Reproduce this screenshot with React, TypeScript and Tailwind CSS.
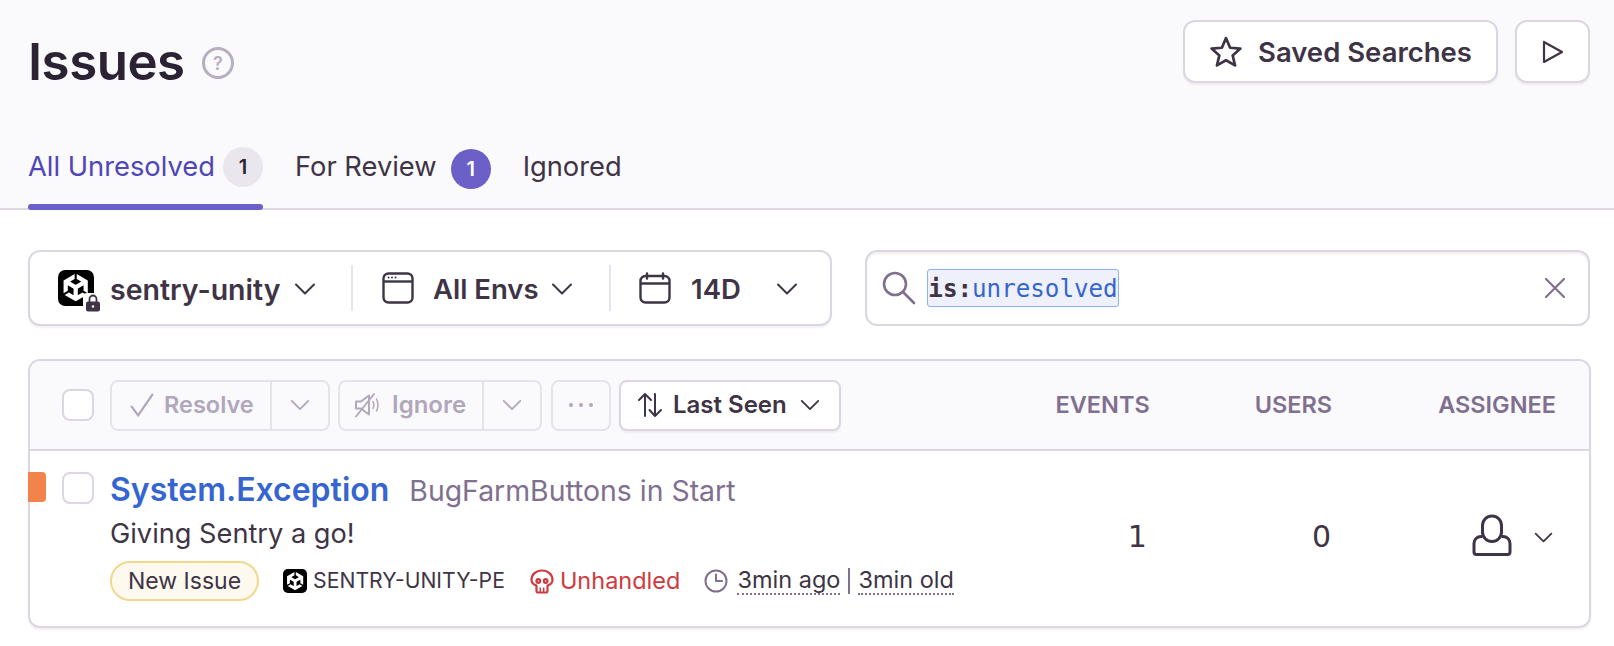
import React from "react";
import { SiUnity } from "react-icons/si";

const Chevron = ({ className = "", w = 24 }: { className?: string; w?: number }) => (
  <svg width={w} height={w} viewBox="0 0 24 24" fill="none" stroke="currentColor" strokeWidth="2" strokeLinecap="round" strokeLinejoin="round" className={className}>
    <path d="M3 7.500 12 16.500 21 7.500" />
  </svg>
);

const Unity = ({ size = 36 }: { size?: number }) => (
  <div className="w-full h-full rounded-[20%] bg-black flex items-center justify-center text-white">
    <SiUnity size={size * 0.76} />
  </div>
);

const Check = () => (
  <div className="w-[32px] h-[32px] rounded-[8px] border-2 border-[#dbd6e1] bg-white shrink-0" />
);

const Dim = "text-[#b0a7bc]";

export default function App() {
  return (
    <div className="w-[1614px] h-[646px] overflow-hidden bg-white text-[#3e3446] font-[Inter,sans-serif]">
      {/* Header */}
      <div className="h-[210px] bg-[#faf9fb] border-b-2 border-[#dbd6e1] pl-[28px] pr-[24px] flex flex-col">
        <div className="flex justify-between items-start pt-[20px] h-[147px]">
          <div className="flex items-center gap-[17px] pt-[16px]">
            <h1 className="text-[51px] leading-[52px] font-semibold text-[#2b2233] tracking-[-0.5px]">Issues</h1>
            <svg width="32" height="32" viewBox="0 0 32 32" fill="none" className="mt-[2px]">
              <circle cx="16" cy="16" r="14.500" stroke="#b6aec1" strokeWidth="3" />
              <text x="16" y="22.500" textAnchor="middle" fontSize="18" fontWeight="600" fill="#b6aec1" fontFamily="Inter">?</text>
            </svg>
          </div>
          <div className="flex gap-[17px]">
            <button className="h-[63px] w-[315px] rounded-[12px] border-2 border-[#dbd6e1] bg-white shadow-[0_2px_2px_rgba(43,34,51,0.06)] flex items-center justify-center gap-[15px] text-[27.500px] font-semibold">
              <svg width="34" height="34" viewBox="0 0 24 24" fill="none" stroke="currentColor" strokeWidth="1.900" strokeLinejoin="round"><path d="M12 2.200 14.900 9l7.300.6-5.500 4.800 1.700 7.100L12 17.800l-6.400 3.700 1.700-7.100-5.500-4.800L9.100 9Z" /></svg>
              <span className="pt-[2px]">Saved Searches</span>
            </button>
            <button className="h-[63px] w-[75px] rounded-[12px] border-2 border-[#dbd6e1] bg-white shadow-[0_2px_2px_rgba(43,34,51,0.06)] flex items-center justify-center">
              <svg width="22" height="24" viewBox="0 0 22 24" fill="none" stroke="currentColor" strokeWidth="2.200" strokeLinejoin="round"><path d="M2 2V22L20 12Z" /></svg>
            </button>
          </div>
        </div>
        <div className="flex items-start h-[61px] text-[27.300px] leading-[40px]">
          <div className="relative h-[63px] w-[235px] flex items-start gap-[8px] text-[#4f46b8]">
            <span>All Unresolved</span>
            <span className="w-[40px] h-[40px] rounded-full bg-[#e9e6ed] text-[#2b2233] text-[20px] font-semibold flex items-center justify-center">1</span>
            <div className="absolute left-0 right-0 bottom-0 h-[6px] rounded-[3px] bg-[#6c5fc7]" />
          </div>
          <div className="ml-[32px] flex items-start gap-[14px]">
            <span>For Review</span>
            <span className="w-[40px] h-[40px] mt-[2px] rounded-full bg-[#6c5fc7] text-white text-[20px] font-semibold flex items-center justify-center">1</span>
          </div>
          <span className="ml-[32px]">Ignored</span>
        </div>
      </div>

      {/* Filters */}
      <div className="flex gap-[33px] pl-[28px] pr-[24px] mt-[40px]">
        <div className="w-[804px] h-[76px] rounded-[12px] border-2 border-[#dbd6e1] bg-white shadow-[0_2px_2px_rgba(43,34,51,0.06)] flex items-center font-semibold">
          <div className="w-[321px] pl-[28px] flex items-center gap-[16px] text-[28.500px]">
            <div className="relative w-[36px] h-[36px]">
              <Unity />
              <div className="absolute -right-[9px] -bottom-[7px] w-[20px] h-[20px] bg-white rounded-[4px] flex items-center justify-center">
                <svg width="16" height="18" viewBox="0 0 16 18"><path d="M4.500 8V5a3.500 3.500 0 0 1 7 0v3" fill="none" stroke="#3e3446" strokeWidth="1.800" /><rect x="1" y="7.500" width="14" height="10" rx="2" fill="#3e3446" /><circle cx="8" cy="12.500" r="1.200" fill="#fff" /></svg>
              </div>
            </div>
            <span className="pt-[4px]">sentry-unity</span>
            <Chevron className="ml-[-3px] mt-[2px]" />
          </div>
          <div className="w-[2px] h-[46px] bg-[#e7e3ec]" />
          <div className="w-[256px] pl-[29px] flex items-center gap-[19px] text-[27.500px]">
            <svg width="32" height="32" viewBox="0 0 32 32" fill="none" stroke="currentColor" strokeWidth="2.400"><rect x="1.500" y="1.500" width="29" height="29" rx="5" /><path d="M2 9.500H30" /><circle cx="6.500" cy="5.500" r="1" fill="currentColor" stroke="none" /><circle cx="10" cy="5.500" r="1" fill="currentColor" stroke="none" /><circle cx="13.500" cy="5.500" r="1" fill="currentColor" stroke="none" /></svg>
            <span className="pt-[4px]">All Envs</span>
            <Chevron className="ml-[-8px] mt-[2px]" />
          </div>
          <div className="w-[2px] h-[46px] bg-[#e7e3ec]" />
          <div className="pl-[28px] flex items-center gap-[20px] text-[27.500px]">
            <svg width="32" height="32" viewBox="0 0 32 32" fill="none" stroke="currentColor" strokeWidth="2.400" strokeLinecap="round"><rect x="1.500" y="4" width="29" height="26.500" rx="5" /><path d="M2 11.500H30M8 1.500V6.500M24 1.500V6.500" /></svg>
            <span className="pt-[4px]">14D</span>
            <Chevron className="ml-[14px] mt-[2px]" />
          </div>
        </div>
        <div className="flex-1 h-[76px] rounded-[12px] border-2 border-[#dbd6e1] bg-white shadow-[inset_0_2px_2px_rgba(43,34,51,0.08)] flex items-center pl-[15px] pr-[22px]">
          <svg width="34" height="34" viewBox="0 0 34 34" fill="none" stroke="#80708f" strokeWidth="2.600" strokeLinecap="round"><circle cx="13" cy="13" r="11" /><path d="M21.500 21.500 32 32" /></svg>
          <div className="ml-[11px] h-[38px] w-[192px] rounded-[3px] border border-[#8fb1ee] bg-[#eef1fb] flex items-center justify-center font-['DejaVu_Sans_Mono',monospace] text-[24.200px] leading-none">
            <span className="pt-[3px]"><span className="font-bold text-[#3e3446]">is:</span><span className="text-[#3565d0]">unresolved</span></span>
          </div>
          <svg width="22" height="22" viewBox="0 0 22 22" fill="none" stroke="#80708f" strokeWidth="2.200" strokeLinecap="round" className="ml-auto"><path d="M2 2 20 20M20 2 2 20" /></svg>
        </div>
      </div>

      {/* Table */}
      <div className="ml-[28px] mr-[23px] mt-[33px] h-[269px] rounded-[12px] border-2 border-[#dbd6e1] bg-white shadow-[0_2px_2px_rgba(43,34,51,0.06)]">
        <div className="h-[90px] rounded-t-[10px] bg-[#faf9fb] border-b-2 border-[#dbd6e1] flex items-center pl-[32px] pr-[33px]">
          <Check />
          <div className={`ml-[16px] h-[51px] w-[220px] rounded-[8px] border-2 border-[#e7e3ec] flex items-center text-[23.500px] font-semibold ${Dim}`}>
            <div className="w-[160px] flex items-center pl-[18px] gap-[10px] border-r-2 border-[#e7e3ec] h-full">
              <svg width="24" height="24" viewBox="0 0 22 22" fill="none" stroke="currentColor" strokeWidth="2" strokeLinecap="round"><path d="M1.500 12.500 7.500 20.500 20.500 1.500" /></svg>
              Resolve
            </div>
            <div className="flex-1 flex justify-center"><Chevron w={22} /></div>
          </div>
          <div className={`ml-[8px] h-[51px] w-[204px] rounded-[8px] border-2 border-[#e7e3ec] flex items-center text-[24px] font-semibold ${Dim}`}>
            <div className="w-[144px] flex items-center pl-[14px] gap-[12px] border-r-2 border-[#e7e3ec] h-full">
              <svg width="26" height="26" viewBox="0 0 26 26" fill="none" stroke="currentColor" strokeWidth="1.900" strokeLinecap="round" strokeLinejoin="round"><path d="M2 9.500H7L15 3.500V22.500L7 16.500H2Z" /><path d="M19 9.500C20 11.500 20 14.500 19 16.500M22.500 7C24.200 10.500 24.200 15.500 22.500 19" strokeWidth="1.500" /><path d="M2 24.500 20 2" /></svg>
              Ignore
            </div>
            <div className="flex-1 flex justify-center"><Chevron w={22} /></div>
          </div>
          <div className={`ml-[9px] h-[51px] w-[60px] rounded-[8px] border-2 border-[#e7e3ec] flex items-center justify-center gap-[6px] ${Dim}`}>
            <span className="w-[4px] h-[4px] rounded-full bg-current" />
            <span className="w-[4px] h-[4px] rounded-full bg-current" />
            <span className="w-[4px] h-[4px] rounded-full bg-current" />
          </div>
          <div className="ml-[8px] h-[51px] w-[222px] rounded-[8px] border-2 border-[#dbd6e1] bg-white shadow-[0_2px_2px_rgba(43,34,51,0.06)] flex items-center pl-[16px] gap-[10px] text-[24px] font-semibold">
            <svg width="26" height="26" viewBox="0 0 26 26" fill="none" stroke="currentColor" strokeWidth="2" strokeLinecap="round" strokeLinejoin="round"><path d="M8 24V2M2 8 8 2 14 8" /><path d="M18 2V24M12.500 18 18 24 24 18" /></svg>
            Last Seen
            <Chevron w={22} className="ml-[2px]" />
          </div>
          <div className="ml-auto flex text-[23.500px] font-semibold text-[#80708f]">
            <span>EVENTS</span>
            <span className="ml-[105px]">USERS</span>
            <span className="ml-[106px]">ASSIGNEE</span>
          </div>
        </div>
        <div className="relative h-[175px] flex pl-[32px] pt-[21px] pr-[35px]">
          <div className="absolute -left-[2px] top-[21px] w-[18px] h-[30px] rounded-r-[4px] bg-[#f2834a]" />
          <Check />
          <div className="ml-[16px] w-[900px]">
            <div className="flex items-baseline gap-[20px]">
              <span className="text-[32px] leading-[36px] font-semibold text-[#3565d0]">System.Exception</span>
              <span className="text-[28.400px] leading-[36px] text-[#80708f]">BugFarmButtons in Start</span>
            </div>
            <div className="text-[27.200px] leading-[36px] mt-[7px]">Giving Sentry a go!</div>
            <div className="flex items-center mt-[9px] text-[23.500px]">
              <span className="h-[40px] px-[16px] rounded-full border-2 border-[#f2d88f] bg-[#fdf9ef] flex items-center text-[23px]">New Issue</span>
              <span className="ml-[24px] w-[24px] h-[24px]"><Unity size={24} /></span>
              <span className="ml-[6px] text-[21.200px]">SENTRY-UNITY-PE</span>
              <svg width="24" height="25" viewBox="0 0 24 25" fill="none" stroke="#d0393e" strokeWidth="2.200" strokeLinejoin="round" className="ml-[25px]"><path d="M12 1.500C6 1.500 1.500 5.500 1.500 11c0 2.500 1.500 4.500 5 5.500V21.500c0 1 .5 2 1.500 2h8c1 0 1.500-1 1.500-2V16.500c3.500-1 5-3 5-5.500C22.500 5.500 18 1.500 12 1.500Z" /><circle cx="8.300" cy="12" r="1.800" /><circle cx="15.700" cy="12" r="1.800" /><path d="M10.300 18.500v5M13.700 18.500v5" strokeWidth="1.500" /></svg>
              <span className="ml-[6px] text-[#d0393e]">Unhandled</span>
              <svg width="24" height="24" viewBox="0 0 24 24" fill="none" stroke="#80708f" strokeWidth="2" strokeLinecap="round" strokeLinejoin="round" className="ml-[24px]"><circle cx="12" cy="12" r="10.500" /><path d="M12 5.500V12H18" /></svg>
              <span className="ml-[9px] border-b-2 border-dotted border-[#80708f] leading-[26px]">3min ago</span>
              <span className="mx-[8px] w-[2px] h-[26px] bg-[#80708f]" />
              <span className="border-b-2 border-dotted border-[#80708f] leading-[26px]">3min old</span>
            </div>
          </div>
          <div className="ml-auto flex items-start pt-[47px] text-[30px] leading-[36px] font-['DejaVu_Sans',sans-serif]">
            <span>1</span>
            <span className="ml-[165px]">0</span>
            <svg width="40" height="42" viewBox="0 0 40 42" fill="none" stroke="currentColor" strokeWidth="3" strokeLinejoin="round" className="ml-[141px] -mt-[5px]"><rect x="10.500" y="2" width="19" height="25.500" rx="9.500" /><path d="M10.500 22.500H9C5 22.500 2 25.500 2 29.500V38C2 39.500 3 40.500 4.500 40.500H35.500C37 40.500 38 39.500 38 38V29.500C38 25.500 35 22.500 31 22.500H29.500" /></svg>
            <Chevron w={21} className="ml-[21px] mt-[8px]" />
          </div>
        </div>
      </div>
    </div>
  );
}
